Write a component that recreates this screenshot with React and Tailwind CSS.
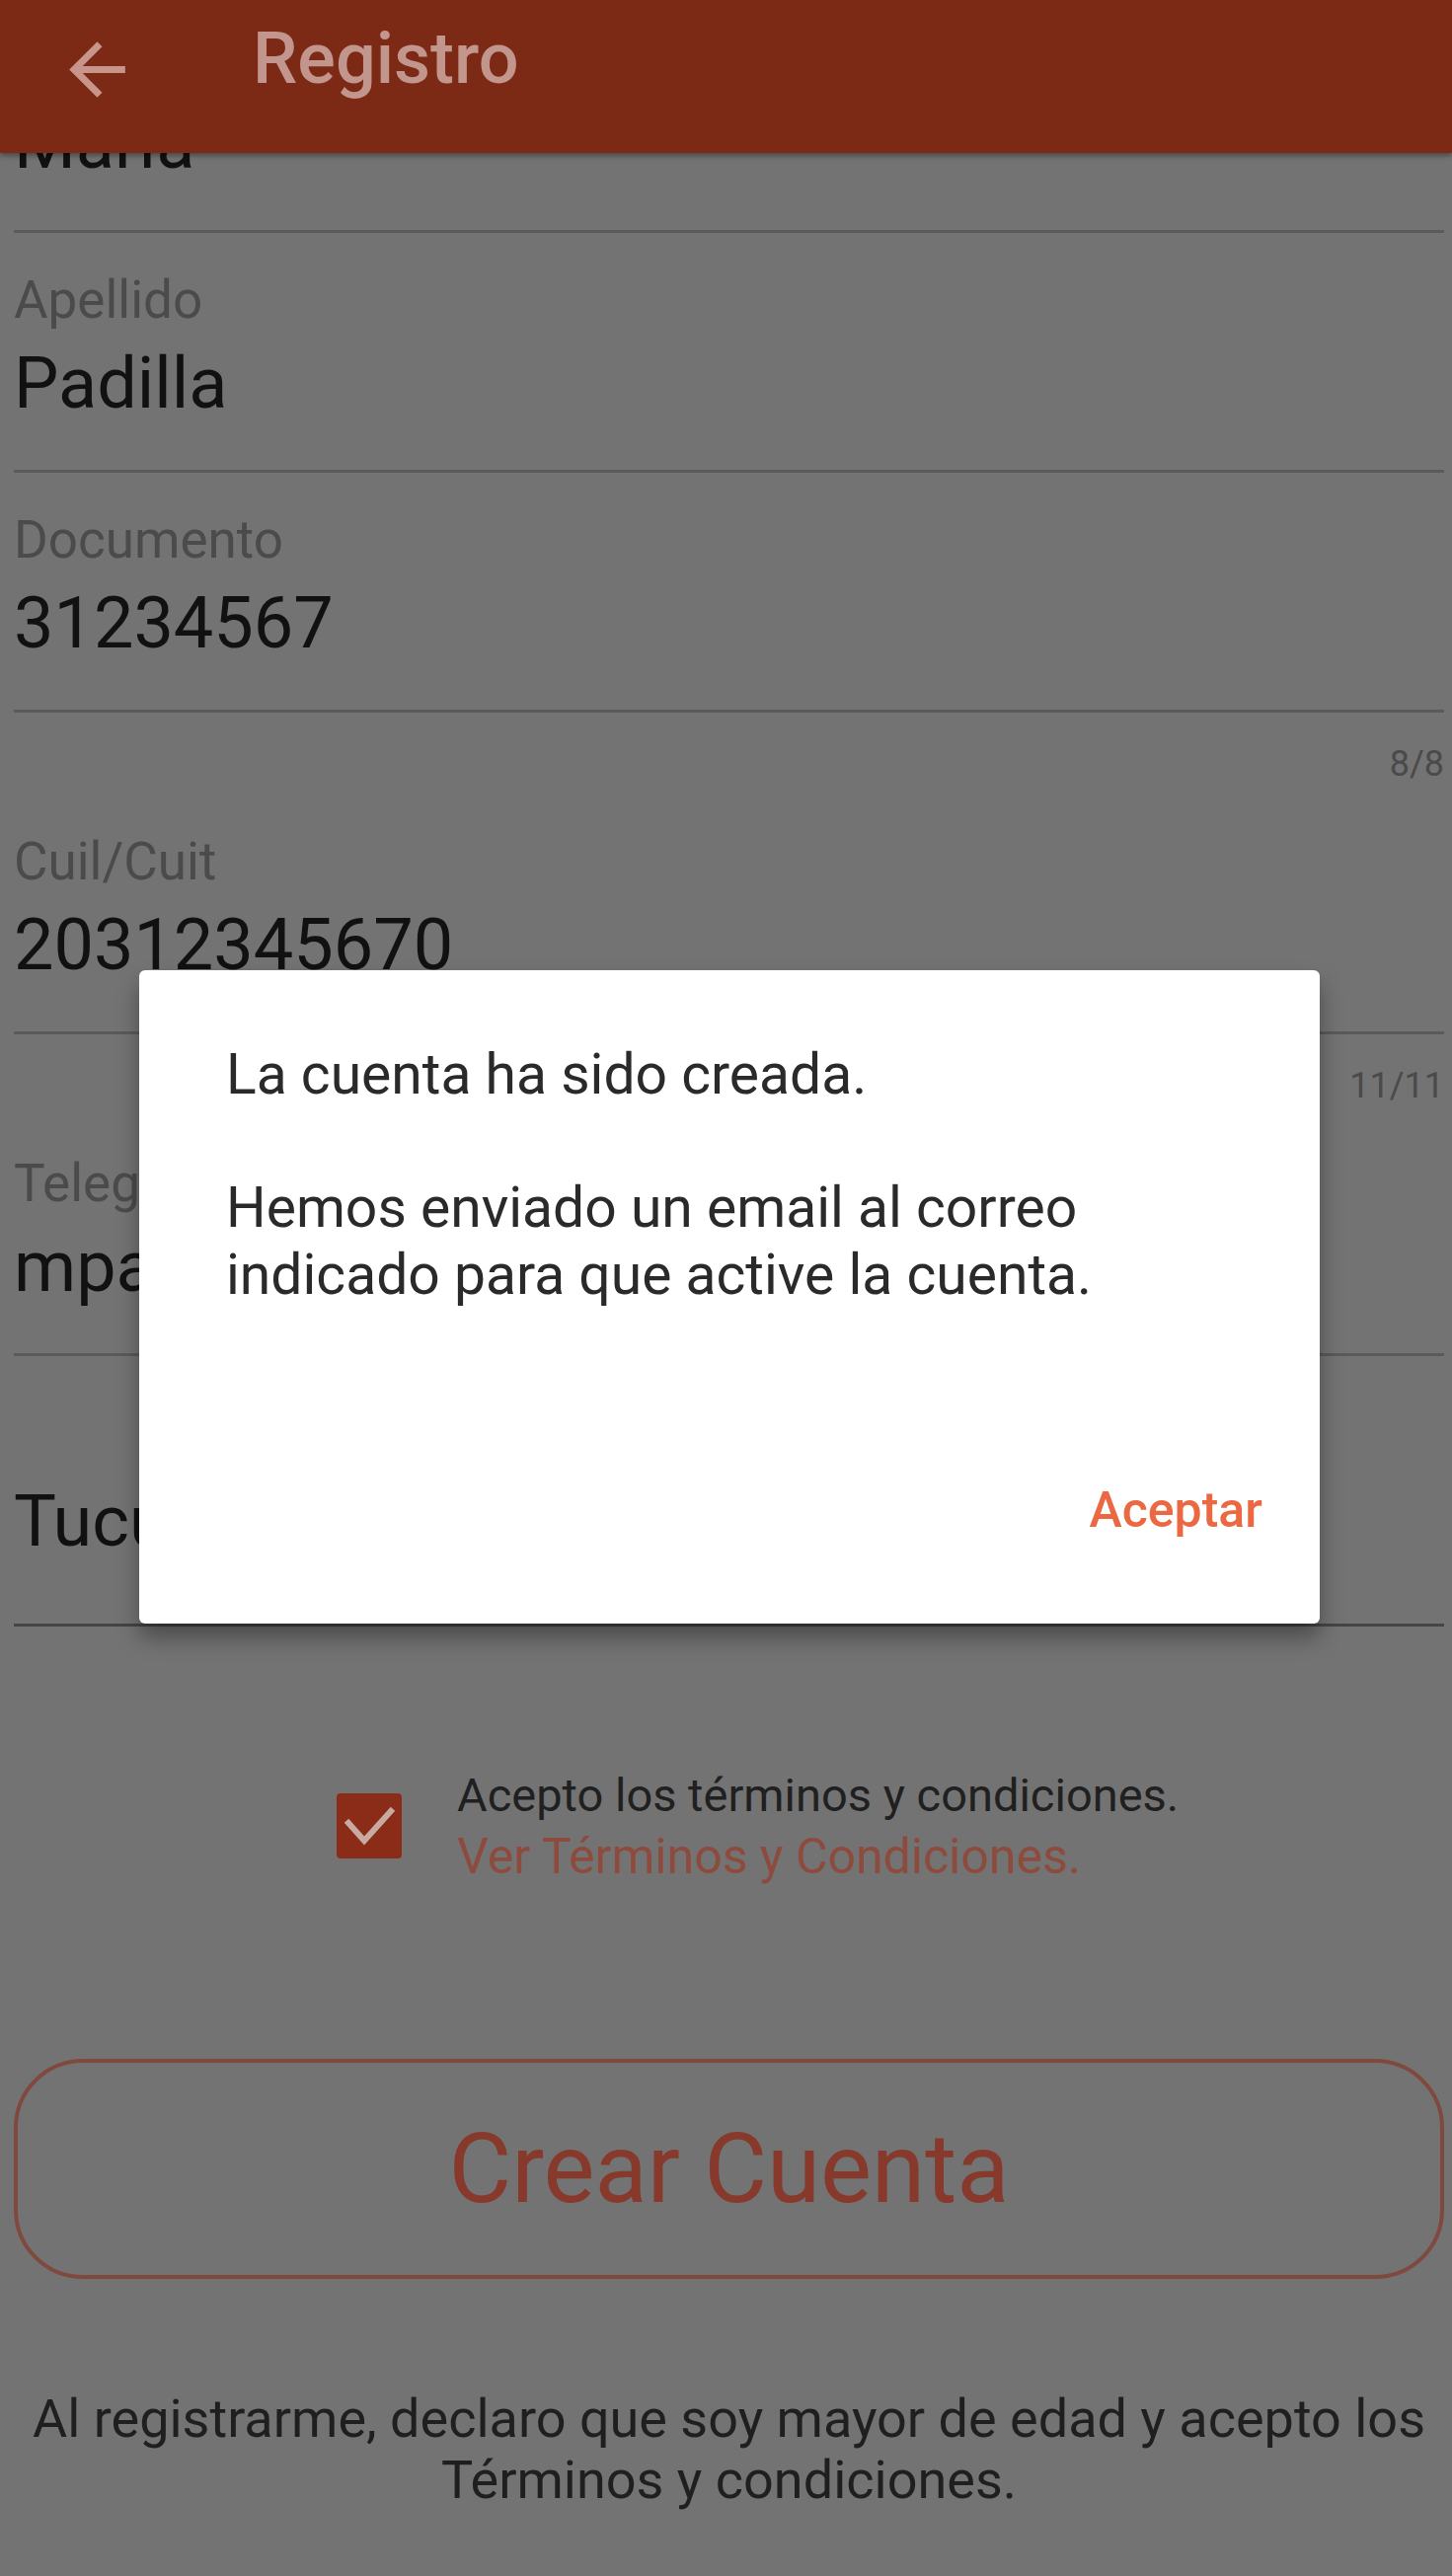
import React from 'react';

function Field({ label, value, className = '' }) {
  return (
    <div className={`border-b-[3px] border-[#5a5a5a] pt-[36px] pb-[47px] ${className}`}>
      <div className="h-[64px] whitespace-nowrap text-[53px] leading-[64px] text-[#4b4b4b]">{label}</div>
      <div className="mt-[13px] h-[80px] whitespace-nowrap text-[72px] leading-[80px] text-[#111111]">{value}</div>
    </div>
  );
}

function Counter({ text }) {
  return (
    <div className="h-[83px] pt-[30px] pb-[9px] text-right text-[36px] leading-[44px] text-[#4a4a4a]">
      {text}
    </div>
  );
}

export default function App() {
  return (
    <div className="relative min-h-[2610px] overflow-hidden bg-[#737373] font-['Roboto',sans-serif]">
      <header className="relative z-10 flex h-[155px] items-start bg-[#7c2915] shadow-[0_3px_5px_rgba(0,0,0,0.35)]">
        <svg className="ml-[56px] mt-[28px] h-[85px] w-[85px]" viewBox="0 0 24 24" fill="#c8958a">
          <path d="M20 11H7.83l5.59-5.59L12 4l-8 8 8 8 1.41-1.41L7.83 13H20v-2z" />
        </svg>
        <h1 className="ml-[115px] mt-[18px] text-[72px] font-medium leading-[84px] text-[#c2968c]">Registro</h1>
      </header>

      <main className="overflow-hidden pl-[14px] pr-[8px]">
        <Field label="Nombre" value="María" className="-mt-[162px]" />
        <Field label="Apellido" value="Padilla" />
        <Field label="Documento" value="31234567" />
        <Counter text="8/8" />
        <Field label="Cuil/Cuit" value="20312345670" />
        <Counter text="11/11" />
        <Field label="Telegram" value="mpadilla" />

        <div className="border-b-[3px] border-[#454545] pt-[128px] pb-[63px]">
          <div className="h-[80px] text-[72px] leading-[80px] text-[#111111]">Tucumán</div>
        </div>

        <div className="mt-[140px] flex items-center pl-[327px]">
          <div className="flex h-[66px] w-[66px] shrink-0 items-center justify-center rounded-[4px] bg-[#8a2c17]">
            <svg viewBox="0 0 66 66" className="h-[66px] w-[66px]" fill="none">
              <polyline points="12,30 28,48 55,18" stroke="#c9aaa0" strokeWidth="6" strokeLinecap="square" />
            </svg>
          </div>
          <div className="ml-[56px] leading-[62px]">
            <div className="text-[47px] text-[#202020]">Acepto los términos y condiciones.</div>
            <div className="text-[50px] text-[#8d4b3e]">Ver Términos y Condiciones.</div>
          </div>
        </div>

        <button className="mt-[174px] flex h-[223px] w-full items-center justify-center rounded-[70px] border-[4px] border-[#80493f] text-[98px] leading-[110px] text-[#87392b]">
          Crear Cuenta
        </button>

        <p className="mt-[111px] text-center text-[54px] leading-[62px] text-[#1f1f1f]">
          Al registrarme, declaro que soy mayor de edad y acepto los
          <br />
          Términos y condiciones.
        </p>
      </main>

      <div className="absolute inset-0 z-20 flex items-center justify-center pt-[18px] pl-[7px]">
        <div className="flex h-[662px] w-[1196px] flex-col rounded-[6px] bg-white shadow-[0_14px_22px_rgba(0,0,0,0.35)]">
          <div className="px-[88px] pt-[72px] text-[57px] leading-[67.5px] text-[#2a2a2a]">
            <div>La cuenta ha sido creada.</div>
            <div className="h-[67.5px]" />
            <div>Hemos enviado un email al correo</div>
            <div>indicado para que active la cuenta.</div>
          </div>
          <div className="mt-auto flex justify-end pr-[58px] pb-[85px]">
            <button className="text-[50px] font-medium leading-[60px] text-[#ec6842]">Aceptar</button>
          </div>
        </div>
      </div>
    </div>
  );
}
